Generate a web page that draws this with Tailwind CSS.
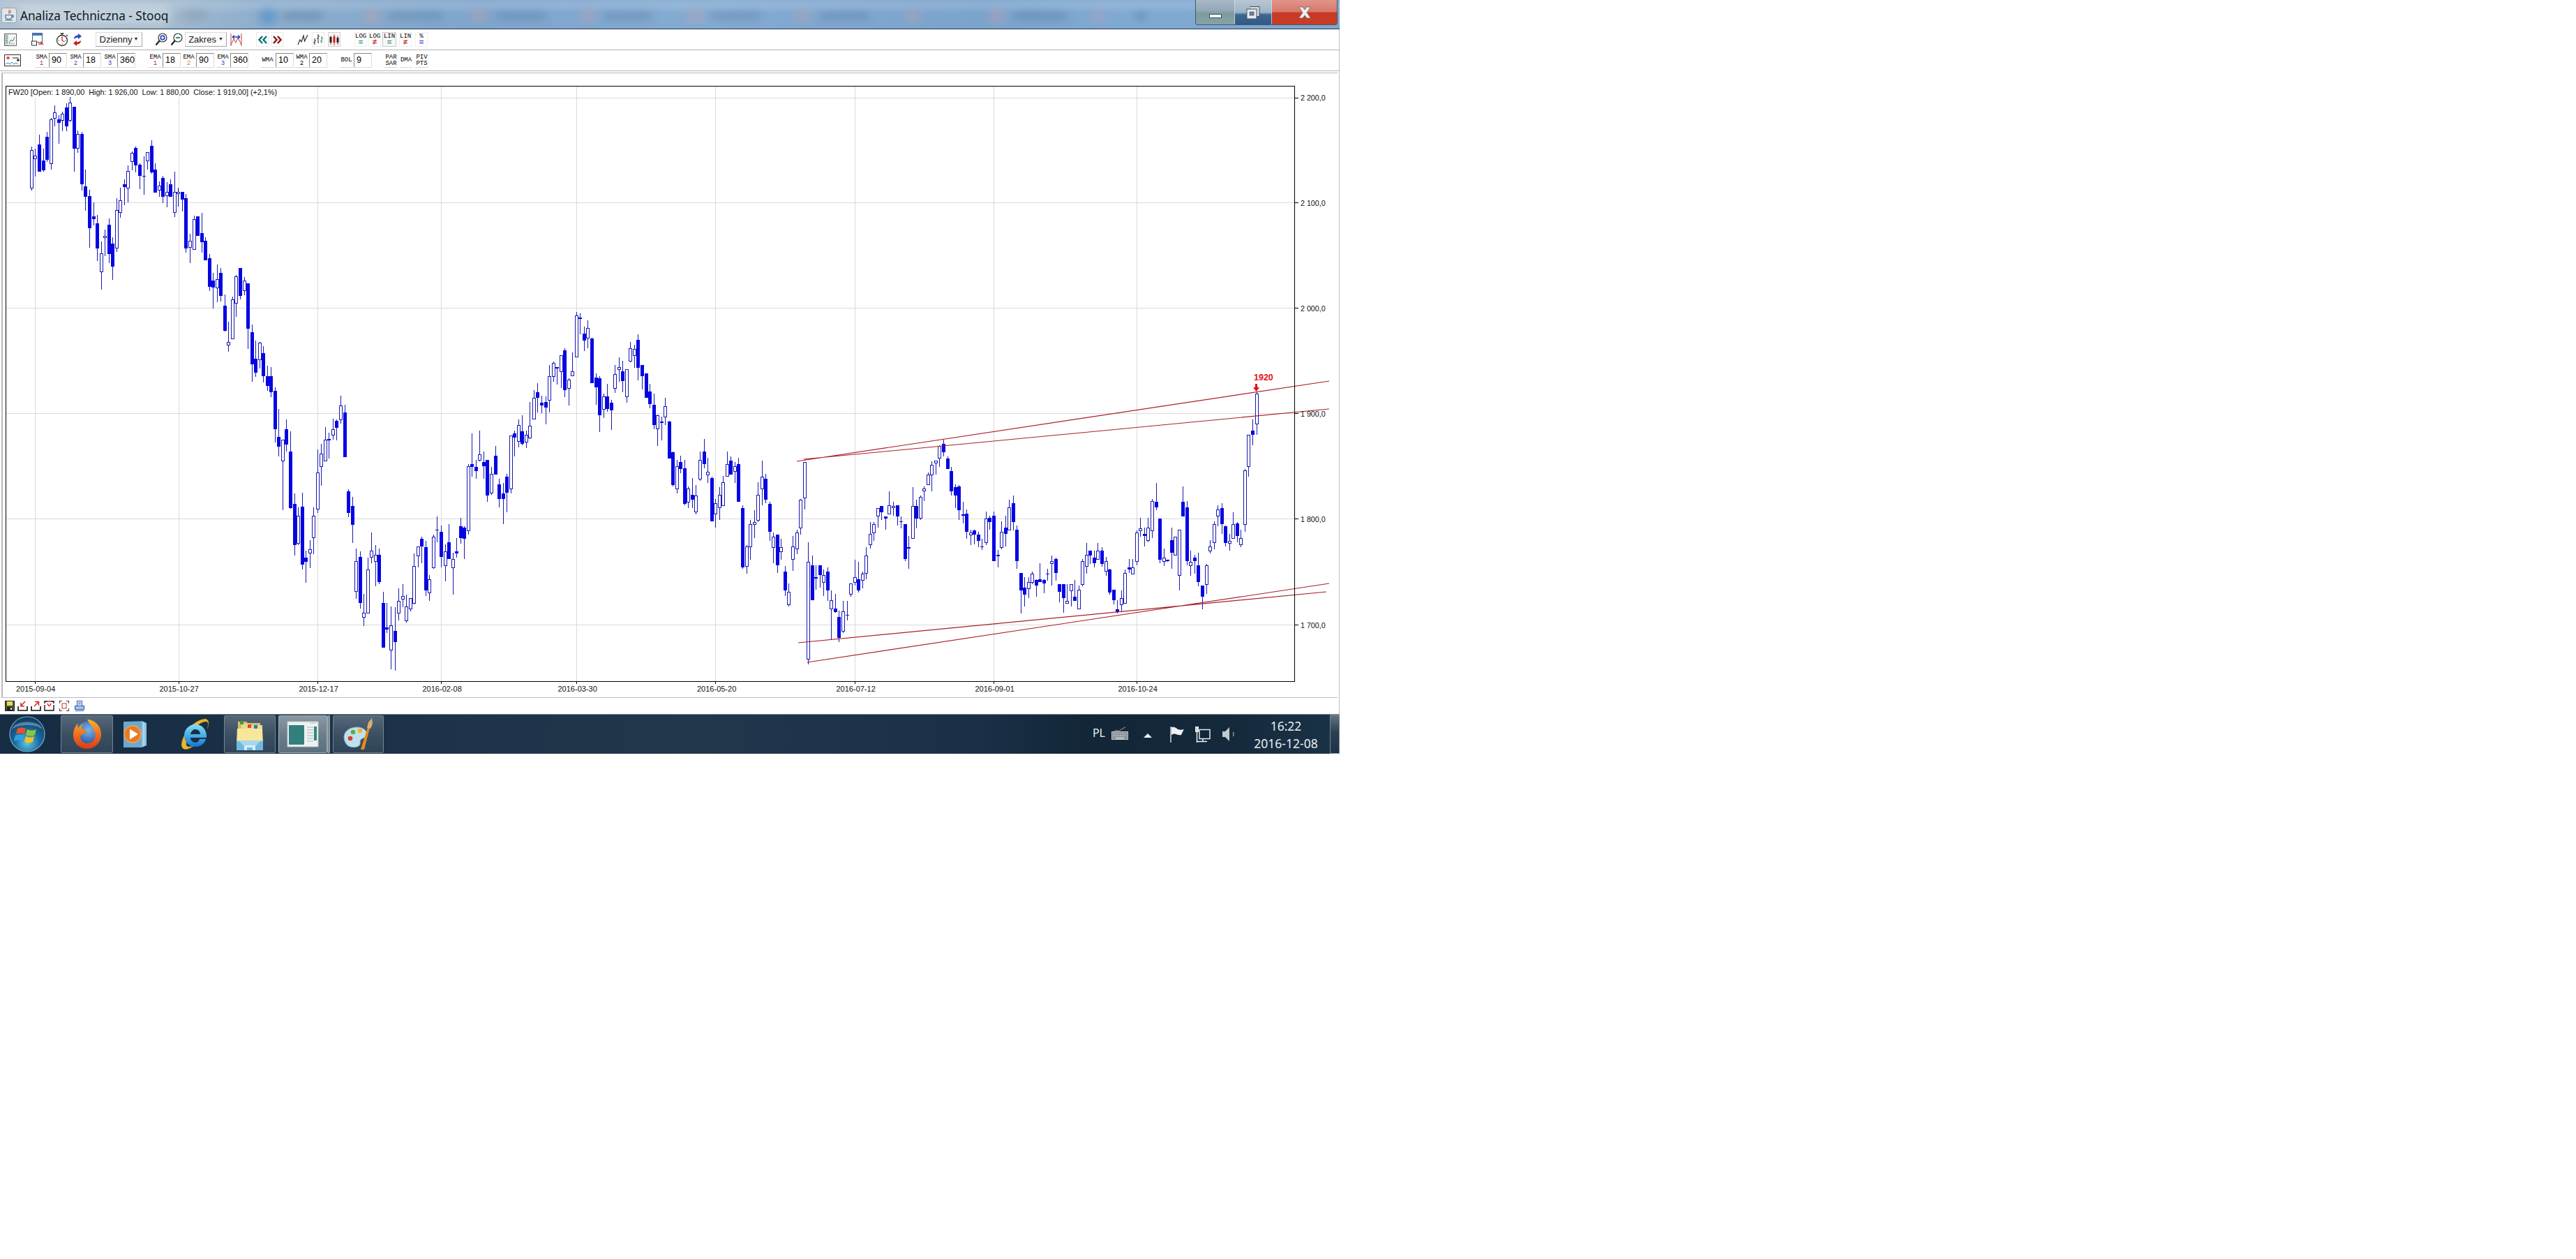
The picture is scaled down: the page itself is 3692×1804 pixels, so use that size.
<!DOCTYPE html>
<html><head><meta charset="utf-8">
<script src="https://cdn.jsdelivr.net/npm/@tailwindcss/browser@4"></script>
<title>Analiza Techniczna - Stooq</title></head>
<body class="bg-white">
<div class="w-[1920px] h-[1080px] flex flex-col font-['Liberation_Sans',sans-serif] text-black overflow-hidden">

<!-- title bar -->
<header class="relative h-[42px] shrink-0 overflow-hidden border-b border-[#24384c] bg-[linear-gradient(90deg,#aebfd0_0px,#a3bace_240px,#8fafcd_360px,#7ea5cd_700px,#84abd2_1000px,#7ba3cc_1400px,#80a9d2_1600px,#7ea6cf_1920px)]">
  <div class="absolute left-0 right-0 top-0 h-[14px] bg-white/15 blur-[4px]"></div>
  <div class="absolute left-[262px] top-[16px] w-[34px] h-[12px] rounded-full bg-[#60748a]/30 blur-[7px]"></div>
  <div class="absolute left-[372px] top-[14px] w-[24px] h-[20px] rounded-full bg-[#3d82c8]/60 blur-[7px]"></div>
  <div class="absolute left-[405px] top-[18px] w-[58px] h-[10px] rounded-full bg-[#3c5f86]/35 blur-[6px]"></div>
  <div class="absolute left-[522px] top-[14px] w-[22px] h-[18px] rounded-full bg-[#c8a0a8]/50 blur-[7px]"></div>
  <div class="absolute left-[555px] top-[18px] w-[80px] h-[10px] rounded-full bg-[#46668a]/30 blur-[6px]"></div>
  <div class="absolute left-[674px] top-[14px] w-[24px] h-[18px] rounded-full bg-[#c8a0a8]/45 blur-[7px]"></div>
  <div class="absolute left-[712px] top-[18px] w-[70px] h-[10px] rounded-full bg-[#46668a]/30 blur-[6px]"></div>
  <div class="absolute left-[830px] top-[14px] w-[24px] h-[18px] rounded-full bg-[#c8a0a8]/40 blur-[7px]"></div>
  <div class="absolute left-[865px] top-[18px] w-[70px] h-[10px] rounded-full bg-[#46668a]/30 blur-[6px]"></div>
  <div class="absolute left-[985px] top-[14px] w-[24px] h-[18px] rounded-full bg-[#c8a0a8]/40 blur-[7px]"></div>
  <div class="absolute left-[1020px] top-[18px] w-[70px] h-[10px] rounded-full bg-[#46668a]/30 blur-[6px]"></div>
  <div class="absolute left-[1140px] top-[14px] w-[24px] h-[18px] rounded-full bg-[#c8a0a8]/40 blur-[7px]"></div>
  <div class="absolute left-[1175px] top-[18px] w-[70px] h-[10px] rounded-full bg-[#46668a]/30 blur-[6px]"></div>
  <div class="absolute left-[1296px] top-[14px] w-[24px] h-[18px] rounded-full bg-[#c8a0a8]/40 blur-[7px]"></div>
  <div class="absolute left-[1418px] top-[14px] w-[22px] h-[18px] rounded-full bg-[#c8a0b0]/50 blur-[7px]"></div>
  <div class="absolute left-[1454px] top-[18px] w-[76px] h-[10px] rounded-full bg-[#46668a]/35 blur-[6px]"></div>
  <div class="absolute left-[1566px] top-[14px] w-[16px] h-[18px] rounded-full bg-[#c8a0b0]/45 blur-[7px]"></div>
  <div class="absolute left-[1627px] top-[18px] w-[16px] h-[10px] rounded-full bg-[#46668a]/40 blur-[6px]"></div>
  <div class="absolute left-[24px] top-[8px] w-[222px] h-[28px] rounded-full bg-white/30 blur-[7px]"></div>
  <div class="absolute left-[2px] top-[11px]">
    <svg width="22" height="22" viewBox="0 0 22 22"><rect x=".5" y=".5" width="21" height="21" rx="3" fill="#dfe6ec" stroke="#9aa5b0"/><path d="M11 3c2 2-2 3 0 5.500M13 4c1 1.500-1 2.500 0 4" fill="none" stroke="#d9631c" stroke-width="1.300"/><path d="M6 10.500h9v3.500c0 2-2 2.500-4.500 2.500S6 16 6 14zM15 11h2v2.500h-2M5 18h11" fill="none" stroke="#3b6ea5" stroke-width="1.200"/></svg>
  </div>
  <h1 class="absolute left-[29px] top-[10px] text-[17.200px] leading-[26px] font-normal text-[#101820] font-['Noto_Sans',sans-serif] whitespace-nowrap">Analiza Techniczna - Stooq</h1>
  <div class="absolute left-[1713px] top-0 w-[204px] h-[36px] flex rounded-b-[4px] border border-t-0 border-[#44586c] overflow-hidden">
    <div class="w-[56px] h-full flex items-center justify-center border-r border-[#dfe6ea]/70 bg-[linear-gradient(180deg,#a9b9c8_0%,#90a6b6_45%,#7d9a9c_55%,#86a3a8_100%)]">
      <span class="block w-[18px] h-[6px] mt-[10px] bg-[#f2f4f5] border border-[#45515c]"></span>
    </div>
    <div class="w-[53px] h-full flex items-center justify-center border-r border-[#dfe6ea]/70 bg-[linear-gradient(180deg,#b7c7d4_0%,#9db5c7_50%,#3f6790_60%,#2f5a88_100%)]">
      <svg width="20" height="20" viewBox="0 0 20 20"><path d="M5 1.500h14v14h-4" fill="#d5dce2" stroke="#48535e"/><rect x="1" y="5" width="14" height="14" fill="#e8ecef" stroke="#48535e"/><rect x="5" y="9" width="6" height="5" fill="#6d8197" stroke="#48535e" stroke-width=".7"/></svg>
    </div>
    <div class="flex-1 h-full flex items-center justify-center bg-[linear-gradient(180deg,#e2948a_0%,#d8786c_48%,#c93a24_52%,#c83c28_100%)]">
      <svg width="20" height="18" viewBox="0 0 20 18"><path d="M1.500 1h5.500l3 4 3-4h5.500l-5.500 8 5.500 8H13l-3-4-3 4H1.500l5.500-8z" fill="#eee" stroke="#6b6560" stroke-width=".8"/></svg>
    </div>
  </div>
</header>

<div class="flex-1 flex flex-col border-r border-[#bdbdbd] min-h-0">
<!-- toolbar row 1 -->
<nav class="h-[30px] shrink-0 border-b border-[#b3b3b3] flex items-center pl-[6px]">
  <svg width="18" height="18" viewBox="0 0 18 18"><rect x=".5" y=".5" width="17" height="17" fill="#f4f8f6" stroke="#5d6a66"/><rect x="1" y="1" width="5" height="16" fill="#c6d9cf"/><path d="M2 4h3M2 7h3M2 10h3M2 13h3" stroke="#607a6e"/><path d="M7 14l3-5 2 2 3-6" fill="none" stroke="#4a7a60"/><path d="M8 16v-2M11 16v-3M14 16v-2" stroke="#7a8a84"/></svg>
  <span class="ml-[21px]"><svg width="18" height="19" viewBox="0 0 18 19"><rect x="1.500" y=".5" width="14" height="13" fill="#fff" stroke="#445a80"/><rect x="1.500" y=".5" width="14" height="3.500" fill="#4a77b8"/><rect x=".5" y="12" width="7" height="6" fill="#fff" stroke="#333"/><path d="M10 16h6M13 13l3 3-3 0" fill="none" stroke="#d22" stroke-width="1.500"/></svg></span>
  <span class="ml-[17px]"><svg width="18" height="20" viewBox="0 0 18 20"><circle cx="9" cy="11" r="7.500" fill="#fff" stroke="#333" stroke-width="1.300"/><path d="M6.500 1h5M9 1v2.500M15 3l1.800 1.800" stroke="#333" stroke-width="1.500"/><path d="M9 11V5.500M9 11l3.500 2" stroke="#d22" stroke-width="1.300"/><path d="M3.500 11h1.500M13 11h1.500M9 15v1.500" stroke="#555"/></svg></span>
  <span class="ml-[6px]"><svg width="14" height="20" viewBox="0 0 14 20"><path d="M2 9c0-4 3-5.500 6-5.500V1l5 4-5 4V6.500C6 6.500 4 7.500 2 9z" fill="#2b47c8"/><path d="M12 11c0 4-3 5.500-6 5.500V19l-5-4 5-4v2.500c2 0 4-1 6-2.500z" fill="#c8201c"/></svg></span>
  <button class="ml-[19px] w-[67px] h-[21px] flex items-center justify-center border border-[#dcdcdc] border-b-[#a8a8a8] border-r-[#a8a8a8] text-[13px] text-[#222] bg-[#fbfbfb]">Dzienny<span class="ml-[2px] text-[7px]">▼</span></button>
  <span class="ml-[18px]"><svg width="18" height="19" viewBox="0 0 18 19"><circle cx="11" cy="7" r="6" fill="#fff" stroke="#333" stroke-width="1.200"/><path d="M6.500 11.500L1.500 17.500" stroke="#222" stroke-width="2.200"/><circle cx="11" cy="7" r="3.800" fill="#2d50c0"/><path d="M8.800 7h4.400M11 4.800v4.400" stroke="#fff" stroke-width="1.300"/></svg></span>
  <span class="ml-[4px]"><svg width="18" height="19" viewBox="0 0 18 19"><circle cx="11" cy="7" r="6" fill="#fff" stroke="#333" stroke-width="1.200"/><path d="M6.500 11.500L1.500 17.500" stroke="#222" stroke-width="2.200"/><path d="M8 7h6" stroke="#1d9a55" stroke-width="2"/></svg></span>
  <button class="ml-[3px] w-[60px] h-[21px] flex items-center justify-center border border-[#dcdcdc] border-b-[#a8a8a8] border-r-[#a8a8a8] text-[13px] text-[#222] bg-[#fbfbfb]">Zakres<span class="ml-[3px] text-[7px]">▼</span></button>
  <span class="ml-[5px]"><svg width="17" height="20" viewBox="0 0 17 20"><path d="M1 1v18M16 1v18" stroke="#b43" stroke-width="1"/><path d="M1 17l4-8 3 5 3-7 5 10" fill="none" stroke="#c33"/><path d="M3 6h11M3 6l3-2.500M3 6l3 2.500M14 6l-3-2.500M14 6l-3 2.500" fill="none" stroke="#2240c8" stroke-width="1.300"/></svg></span>
  <span class="ml-[20px] w-[18px] h-[21px] flex items-center justify-center border border-[#e9e9e9]"><svg width="13" height="12" viewBox="0 0 13 12"><path d="M6 1L1.500 6 6 11M12 1L7.500 6l4.500 5" fill="none" stroke="#0b7a78" stroke-width="2.600"/></svg></span>
  <span class="ml-[4px] w-[17px] h-[21px] flex items-center justify-center border border-[#e9e9e9]"><svg width="13" height="12" viewBox="0 0 13 12"><path d="M1 1l4.500 5L1 11M7 1l4.500 5L7 11" fill="none" stroke="#8d1a1a" stroke-width="2.600"/></svg></span>
  <span class="ml-[19px] w-[18px] h-[21px] flex items-center justify-center"><svg width="16" height="16" viewBox="0 0 16 16"><path d="M1 15l3-7 2 3 3-9 1.500 8L15 1" fill="none" stroke="#222" stroke-width="1.100"/></svg></span>
  <span class="ml-[4px] w-[18px] h-[21px] flex items-center justify-center border border-[#e9e9e9]"><svg width="16" height="17" viewBox="0 0 16 17"><path d="M3 7v9M1 13h2M3 10h2M8 1v13M6 7h2M8 4h2" stroke="#222"/><path d="M13 4v10M11 11h2M13 7h2" stroke="#16884a"/></svg></span>
  <span class="ml-[5px] w-[18px] h-[21px] flex items-center justify-center border border-[#cfcfcf] bg-[#f6f6f6]"><svg width="16" height="18" viewBox="0 0 16 18"><path d="M3 3v13M8 1v16M13 3v13" stroke="#c22"/><rect x="1.500" y="5" width="3" height="8" fill="#222"/><rect x="6.500" y="4" width="3" height="9" fill="#c22"/><rect x="11.500" y="6" width="3" height="7" fill="#222"/></svg></span>

  <div class="ml-[20px] flex items-center gap-[2px] font-['Liberation_Mono',monospace] text-[9px] leading-[9px] text-center">
    <span class="w-[18px] h-[21px] pt-[1px] border border-[#efefef]">LOG<br><b class="text-[#109050] text-[11px]">=</b></span>
    <span class="w-[18px] h-[21px] pt-[1px] border border-[#efefef]">LOG<br><b class="text-[#d02020] text-[11px]">≠</b></span>
    <span class="w-[20px] h-[21px] pt-[1px] border border-[#c8c8c8] bg-[#f7f7f7]">LIN<br><b class="text-[#109050] text-[11px]">=</b></span>
    <span class="w-[18px] h-[21px] pt-[1px] ml-[2px] border border-[#efefef]">LIN<br><b class="text-[#d02020] text-[11px]">≠</b></span>
    <span class="w-[18px] h-[21px] pt-[1px] ml-[3px] border border-[#efefef]">%<br><b class="text-[#2040c8] text-[11px]">=</b></span>
  </div>
</nav>

<!-- toolbar row 2 -->
<nav class="h-[30px] shrink-0 border-b border-[#b3b3b3] flex items-center pl-[6px] font-['Liberation_Mono',monospace] text-[9px] leading-[9px] text-center">
  <svg width="24" height="17" viewBox="0 0 24 17"><rect x=".5" y=".5" width="23" height="16" fill="#fff" stroke="#333"/><path d="M3 5h5M5.500 2.500v5" stroke="#d22" stroke-width="1.300"/><path d="M12 5h8M20 5v4M18 7.500l2 2 2-2" fill="none" stroke="#222" stroke-width="1.100"/><path d="M2 14l3-2 3 2 3-3 3 3 3-2 3 2" fill="none" stroke="#2b8ac0"/></svg>
  <div class="ml-[20px] flex items-center">
    <span class="w-[19px] h-[20px] pt-[1px] border-b border-[#d8d8d8]">SMA<br><b class="font-normal text-[#d02020]">1</b></span>
    <span class="ml-[1px] w-[26px] h-[21px] border border-[#dcdcdc] border-t-[#8a8a8a] border-l-[#8a8a8a] pl-[3px] text-left font-['Liberation_Sans',sans-serif] text-[12.500px] leading-[19px]">90</span>
    <span class="ml-[3px] w-[19px] h-[20px] pt-[1px] border-b border-[#d8d8d8]">SMA<br><b class="font-normal text-[#9020b0]">2</b></span>
    <span class="ml-[1px] w-[26px] h-[21px] border border-[#dcdcdc] border-t-[#8a8a8a] border-l-[#8a8a8a] pl-[3px] text-left font-['Liberation_Sans',sans-serif] text-[12.500px] leading-[19px]">18</span>
    <span class="ml-[3px] w-[19px] h-[20px] pt-[1px] border-b border-[#d8d8d8]">SMA<br><b class="font-normal text-[#2040c8]">3</b></span>
    <span class="ml-[1px] w-[26px] h-[21px] border border-[#dcdcdc] border-t-[#8a8a8a] border-l-[#8a8a8a] pl-[3px] text-left font-['Liberation_Sans',sans-serif] text-[12.500px] leading-[19px]">360</span>
  </div>
  <div class="ml-[19px] flex items-center">
    <span class="w-[19px] h-[20px] pt-[1px] border-b border-[#d8d8d8]">EMA<br><b class="font-normal text-[#d02020]">1</b></span>
    <span class="ml-[1px] w-[26px] h-[21px] border border-[#dcdcdc] border-t-[#8a8a8a] border-l-[#8a8a8a] pl-[3px] text-left font-['Liberation_Sans',sans-serif] text-[12.500px] leading-[19px]">18</span>
    <span class="ml-[2px] w-[19px] h-[20px] pt-[1px] border-b border-[#d8d8d8]">EMA<br><b class="font-normal text-[#e08010]">2</b></span>
    <span class="ml-[1px] w-[26px] h-[21px] border border-[#dcdcdc] border-t-[#8a8a8a] border-l-[#8a8a8a] pl-[3px] text-left font-['Liberation_Sans',sans-serif] text-[12.500px] leading-[19px]">90</span>
    <span class="ml-[3px] w-[19px] h-[20px] pt-[1px] border-b border-[#d8d8d8]">EMA<br><b class="font-normal text-[#2040c8]">3</b></span>
    <span class="ml-[1px] w-[26px] h-[21px] border border-[#dcdcdc] border-t-[#8a8a8a] border-l-[#8a8a8a] pl-[3px] text-left font-['Liberation_Sans',sans-serif] text-[12.500px] leading-[19px]">360</span>
  </div>
  <div class="ml-[18px] flex items-center">
    <span class="w-[19px] h-[20px] pt-[5px] border-b border-[#d8d8d8]">WMA</span>
    <span class="ml-[2px] w-[26px] h-[21px] border border-[#dcdcdc] border-t-[#8a8a8a] border-l-[#8a8a8a] pl-[3px] text-left font-['Liberation_Sans',sans-serif] text-[12.500px] leading-[19px]">10</span>
    <span class="ml-[2px] w-[19px] h-[20px] pt-[1px] border-b border-[#d8d8d8]">WMA<br>2</span>
    <span class="ml-[1px] w-[26px] h-[21px] border border-[#dcdcdc] border-t-[#8a8a8a] border-l-[#8a8a8a] pl-[3px] text-left font-['Liberation_Sans',sans-serif] text-[12.500px] leading-[19px]">20</span>
  </div>
  <div class="ml-[18px] flex items-center">
    <span class="w-[19px] h-[20px] pt-[5px] border-b border-[#d8d8d8]">BOL</span>
    <span class="ml-[1px] w-[26px] h-[21px] border border-[#dcdcdc] border-t-[#8a8a8a] border-l-[#8a8a8a] pl-[3px] text-left font-['Liberation_Sans',sans-serif] text-[12.500px] leading-[19px]">9</span>
  </div>
  <div class="ml-[18px] flex items-center">
    <span class="w-[19px] h-[20px] pt-[1px] border-b border-[#d8d8d8]">PAR<br>SAR</span>
    <span class="ml-[3px] w-[18px] h-[20px] pt-[5px] border-b border-[#d8d8d8]">DMA</span>
    <span class="ml-[4px] w-[19px] h-[20px] pt-[1px] border-b border-[#d8d8d8]">PIV<br>PTS</span>
  </div>
</nav>

<!-- chart -->
<main class="relative h-[898px] shrink-0 pt-[2px] pl-[2px] pr-[2px]">
  <div class="h-[896px] border-l-2 border-t border-b border-[#b9b9b9]"></div>
  <svg id="chart" class="absolute left-0 top-0" width="1919" height="898" viewBox="0 102 1919 898" font-family="'Liberation Sans',sans-serif">
    <g stroke="#dadada" shape-rendering="crispEdges">
      <path d="M50.500 140V976M256.500 140V976M455.500 124V976M632.500 124V976M826.500 124V976M1025.500 124V976M1225.500 124V976M1424.500 124V976M1629.500 124V976"/>
      <path d="M400 140.500H1856M9 290.500H1856M9 441.500H1856M9 592.500H1856M9 743.500H1856M9 895.500H1856"/>
    </g>
    <g id="candles" shape-rendering="crispEdges"></g>
    <g stroke="#a81f28" stroke-width="1.100" fill="none">
      <path d="M1142 661L1905 546M1152 658L1905 586M1144 921L1901 848M1157 949L1905 836"/>
    </g>
    <rect x="8.500" y="123.500" width="1847" height="852.500" fill="none" stroke="#000" shape-rendering="crispEdges"/>
    <g stroke="#000" shape-rendering="crispEdges">
      <path d="M1856 140.500h5M1856 290.500h5M1856 441.500h5M1856 592.500h5M1856 743.500h5M1856 895.500h5"/>
      <path d="M50.500 976v4M256.500 976v4M455.500 976v4M632.500 976v4M826.500 976v4M1025.500 976v4M1225.500 976v4M1424.500 976v4M1629.500 976v4"/>
    </g>
    <g font-size="11" fill="#111">
      <text x="12" y="136" font-size="10.800" xml:space="preserve">FW20 [Open: 1 890,00  High: 1 926,00  Low: 1 880,00  Close: 1 919,00] (+2,1%)</text>
      <text x="1864" y="144" font-size="10.700">2 200,0</text><text x="1864" y="295" font-size="10.700">2 100,0</text><text x="1864" y="446" font-size="10.700">2 000,0</text><text x="1864" y="597" font-size="10.700">1 900,0</text><text x="1864" y="748" font-size="10.700">1 800,0</text><text x="1864" y="900" font-size="10.700">1 700,0</text>
      <text x="23" y="991">2015-09-04</text><text x="228.500" y="991">2015-10-27</text><text x="428.500" y="991">2015-12-17</text><text x="605.500" y="991">2016-02-08</text><text x="799.500" y="991">2016-03-30</text><text x="999" y="991">2016-05-20</text><text x="1198.500" y="991">2016-07-12</text><text x="1397.500" y="991">2016-09-01</text><text x="1602.500" y="991">2016-10-24</text>
    </g>
    <text x="1797" y="545" font-size="12.500" font-weight="700" fill="#e01018">1920</text>
    <path d="M1799 550h3v5h3l-4.500 6-4.500-6h3z" fill="#e01018"/>
  </svg>
</main>

<!-- bottom toolbar -->
<div class="h-[23px] shrink-0 flex items-center pl-[7px] gap-[4px]">
  <svg width="14" height="15" viewBox="0 0 14 15"><rect x=".5" y=".5" width="13" height="14" fill="#4d5a2a" stroke="#222"/><rect x="3" y="1" width="8" height="6" fill="#e8d860"/><rect x="3" y="9" width="8" height="5" fill="#222"/><rect x="8" y="10" width="2" height="3" fill="#ddd"/></svg>
  <svg width="15" height="15" viewBox="0 0 15 15"><path d="M1 8v6h13V8" fill="none" stroke="#111" stroke-width="1.600"/><path d="M11 1L5.500 7M5 3v5h5" fill="none" stroke="#d22" stroke-width="1.500"/></svg>
  <svg width="15" height="15" viewBox="0 0 15 15"><path d="M1 8v6h13V8" fill="none" stroke="#111" stroke-width="1.600"/><path d="M5 8L11 2M6 1.500h5.500V7" fill="none" stroke="#d22" stroke-width="1.500"/></svg>
  <svg width="15" height="15" viewBox="0 0 15 15"><path d="M1 6v8h13V6M1 4V1h4M14 4V1h-4" fill="none" stroke="#111" stroke-width="1.400"/><path d="M5 4l2 4M10 4L8 8M4 1h7" fill="none" stroke="#d22" stroke-width="1.500"/></svg>
  <span class="ml-[3px]"><svg width="14" height="15" viewBox="0 0 14 15"><path d="M0 4V0h4M10 0h4v4M0 11v4h4M10 15h4v-4" fill="none" stroke="#111" stroke-width="1.600"/><rect x="4" y="4" width="6" height="7" fill="none" stroke="#c33"/></svg></span>
  <span class="ml-[4px]"><svg width="14" height="15" viewBox="0 0 14 15"><rect x="3.500" y=".5" width="7" height="7" fill="#fff" stroke="#2a55a8"/><rect x=".5" y="7.500" width="13" height="5" fill="#a8c4e8" stroke="#2a55a8"/><path d="M5 3h4M5 5h4" stroke="#2a55a8"/><path d="M1 14.500h12" stroke="#2a55a8"/></svg></span>
</div>
</div>

<!-- taskbar -->
<footer class="relative h-[57px] shrink-0 flex items-stretch border-t border-[#7d8992] bg-[linear-gradient(90deg,#152c43_0px,#1b3248_520px,#20374c_1000px,#1a3047_1400px,#122638_1560px,#15293c_1760px,#1b3347_1920px)] text-[#e8eef3] font-['Noto_Sans',sans-serif]">
  <div class="w-[87px] flex items-center justify-center shrink-0">
    <svg width="56" height="54" viewBox="0 0 56 54" class="mr-[10px]"><defs><radialGradient id="orb" cx=".5" cy=".75" r=".8"><stop offset="0" stop-color="#5fc6e8"/><stop offset=".45" stop-color="#1a6aa0"/><stop offset="1" stop-color="#0c2f52"/></radialGradient></defs><circle cx="28" cy="27" r="25" fill="url(#orb)" stroke="#7fa9c2" stroke-width="1.200"/><path d="M14 19c4-2 8-2 12 0l-2 8c-4-2-8-2-12 0z" fill="#e8502c"/><path d="M28 20c4 2 9 2 13 0l-2 8c-4 2-8 2-13 0z" fill="#8cc63f"/><path d="M11 29c4-2 9-2 13 0l-2 8c-4-2-9-2-13 0z" fill="#2aa2e0"/><path d="M26 30c4 2 8 2 12 0l-2 8c-4 2-8 2-12 0z" fill="#f5c21a"/><path d="M6 20C10 6 46 6 50 20 40 12 16 12 6 20z" fill="#fff" opacity=".3"/></svg>
  </div>
  <div class="relative w-[75px] my-[1px] rounded-[2px] border border-[#75838f] bg-[linear-gradient(180deg,#56677a_0%,#3c5062_50%,#2f4458_100%)] flex items-center justify-center">
    <svg width="46" height="46" viewBox="0 0 46 46"><defs><radialGradient id="ffg" cx=".55" cy=".35" r=".6"><stop offset="0" stop-color="#7ab6e8"/><stop offset="1" stop-color="#2a5aa8"/></radialGradient><linearGradient id="ffo" x1="0" y1="0" x2="0" y2="1"><stop offset="0" stop-color="#f7b32a"/><stop offset=".55" stop-color="#ee6a1f"/><stop offset="1" stop-color="#d93a18"/></linearGradient></defs><circle cx="23" cy="22" r="17" fill="url(#ffg)"/><path d="M23 2c9 0 20 8 20 21 0 12-9 21-20 21C11 44 3 35 3 24c0-7 3-13 7-17-1 3-1 5 0 7 2-3 5-5 8-6-3 3-4 5-3 7 3 1 6 2 7 5-2 3-7 2-9 6 0 7 6 11 12 10 7-1 11-8 9-15-2-7-7-12-11-19z" fill="url(#ffo)"/></svg>
  </div>
  <div class="w-[64px] flex items-center justify-center">
    <svg width="42" height="46" viewBox="0 0 42 46"><path d="M6 5l24 -1 6 3v32l-6 3-24-1z" fill="#3f88b8"/><path d="M30 4l7 3v32l-7 3z" fill="#8cc3e2"/><path d="M33 6v34" stroke="#d4ebf6"/><rect x="4" y="5" width="26" height="37" fill="#6ea9cc"/><circle cx="17" cy="23" r="12" fill="#e77c24"/><circle cx="17" cy="23" r="12" fill="none" stroke="#f3a55b" stroke-width="1.500"/><path d="M13 15.500v15l12-7.500z" fill="#fff"/></svg>
  </div>
  <div class="w-[50px] ml-[28px] flex items-center justify-center">
    <svg width="48" height="48" viewBox="0 0 48 48"><defs><linearGradient id="ieb" x1="0" y1="0" x2="0" y2="1"><stop offset="0" stop-color="#7fe0f7"/><stop offset="1" stop-color="#1477d4"/></linearGradient></defs><path d="M39 2c-9 1-21 8-28 20C5 33 3 42 8 45c4 2 11-1 17-6-5 3-10 4-12 2-3-3 0-11 6-20C26 11 36 5 41 6c3 1 3 5 1 10 3-7 3-13-3-14z" fill="#e8b82c" stroke="#a67c10" stroke-width=".5"/><path d="M25 10c-9 0-16 7-16 16s7 16 16 16c7 0 13-4 15-11H31c-1 3-3 5-6 5-4 0-7-3-7-7h23c1-11-6-19-16-19zm-7 14c0-4 3-7 7-7s7 3 7 7z" fill="url(#ieb)" fill-rule="evenodd"/></svg>
  </div>
  <div class="w-[74px] ml-[17px] my-[1px] rounded-[2px] border border-[#75838f] bg-[linear-gradient(180deg,#56677a_0%,#3c5062_50%,#2f4458_100%)] flex items-center justify-center">
    <svg width="50" height="50" viewBox="0 0 50 50"><path d="M8 7h12l2 2h18v30H8z" fill="#d8bf6a"/><path d="M13 10h12l2 2h16v26H13z" fill="#ecd98c"/><rect x="11" y="6" width="5" height="5" fill="#4a9a3a"/><rect x="22" y="11" width="5" height="5" fill="#d84a28"/><rect x="31" y="12" width="5" height="5" fill="#2a7ac8"/><path d="M7 17h36l1 22H6z" fill="#f7e79a"/><path d="M6 35h38v13H6z" fill="#6fb8e0"/><path d="M6 34c6 2 8 5 9 7h20c1-2 3-5 9-7" fill="#a7d6ee"/><path d="M17 48v-7h16v7h-4v-4h-8v4z" fill="#d9eef9"/></svg>
  </div>
  <div class="w-[70px] ml-[4px] my-[1px] rounded-[2px] border border-[#a2aeb6] bg-[linear-gradient(180deg,#8a98a3_0%,#6d7e8b_50%,#5b6f7e_100%)] flex items-center justify-center">
    <svg width="46" height="46" viewBox="0 0 46 46"><rect x="1" y="5" width="44" height="36" fill="#eef1f3" stroke="#b9c2c8"/><rect x="3" y="10" width="22" height="28" fill="#2f8a70"/><rect x="3" y="10" width="22" height="28" fill="#3a6d98" opacity=".35"/><path d="M29 13h9M29 17h9M29 21h9M29 25h9M29 29h9M29 33h9" stroke="#aab4ba"/><rect x="39" y="12" width="4" height="20" fill="#2f8a70"/><path d="M34 7h1M37 7h1M40 7h1" stroke="#555"/></svg>
  </div>
  <div class="w-[4px] my-[1px] rounded-[1px] bg-[#7e8c97] border border-[#95a2ab]"></div>
  <div class="w-[73px] ml-[4px] my-[1px] rounded-[2px] border border-[#75838f] bg-[linear-gradient(180deg,#56677a_0%,#3c5062_50%,#2f4458_100%)] flex items-center justify-center">
    <svg width="50" height="48" viewBox="0 0 50 48"><path d="M4 28c0-9 10-15 21-14 9 1 14 8 11 13-2 3-6 2-8 5-2 3 1 6-3 9-5 3-12 2-16-1-3-3-5-7-5-12z" fill="#bfe0ef" stroke="#7fa8bd"/><circle cx="13" cy="30" r="3.300" fill="#d8402e"/><circle cx="17" cy="21" r="3.300" fill="#58b048"/><circle cx="27" cy="19" r="3.300" fill="#e8b82c"/><path d="M28 46L38 14l3 1-8 31z" fill="#e88a1a"/><path d="M37 15l2-8 5-6 1 8-3 7z" fill="#d8b070"/></svg>
  </div>
  <div class="ml-auto flex items-center">
    <span class="text-[16px] leading-none mb-[5px]">PL</span>
    <span class="ml-[9px] mb-[5px]"><svg width="24" height="20" viewBox="0 0 24 20"><path d="M4 8c2-3 6 1 9-2 2-2 5-3 7-4" fill="none" stroke="#a8b2ba"/><rect x=".5" y="8.500" width="23" height="11" fill="#7c868e" stroke="#c5ccd2"/><path d="M2.500 11h19M2.500 13.500h19M2.500 16h19" stroke="#e2e6ea" stroke-dasharray="2 1"/><path d="M6 18h12" stroke="#eee"/></svg></span>
    <span class="ml-[22px] mt-[4px]"><svg width="12" height="6" viewBox="0 0 12 6"><path d="M0 6L6 0l6 6z" fill="#eef2f5"/></svg></span>
    <span class="ml-[26px]"><svg width="21" height="23" viewBox="0 0 21 23"><path d="M1 0v23" stroke="#f0f3f5" stroke-width="1.300"/><path d="M2 1c4-1 7 1 9 3 3 1 6 1 9 0-2 3-3 6-4 8-4 1-6-1-8-1-2-1-4 0-6 1z" fill="#eef2f5"/></svg></span>
    <span class="ml-[14px]"><svg width="23" height="23" viewBox="0 0 23 23"><rect x="1.500" y="0.500" width="4" height="7" fill="#d8dde1" stroke="#e8ecef"/><path d="M3.500 8v15" stroke="#e8ecef" stroke-width="1.500"/><rect x="7" y="4.500" width="15" height="13" fill="#122638" stroke="#eef2f5" stroke-width="1.400"/><path d="M4 21.500h14M12 18v3" stroke="#eef2f5" stroke-width="1.500"/></svg></span>
    <span class="ml-[17px]"><svg width="18" height="20" viewBox="0 0 18 20"><path d="M0 6h4l6-6v20l-6-6H0z" fill="#c2c8cd"/><path d="M15 7c1.500 2 1.500 4 0 6" fill="none" stroke="#cfd5da"/></svg></span>
    <div class="ml-[27px] w-[92px] pt-[2px] flex flex-col items-center text-[17.500px] leading-[25px]">
      <span>16:22</span><span class="whitespace-nowrap">2016-12-08</span>
    </div>
    <div class="ml-[17px] w-[14px] h-full border border-[#78858f] bg-[linear-gradient(180deg,#647482_0%,#2a3f52_45%,#1c3246_100%)]"></div>
  </div>
</footer>
</div>

<script>
var groups=[
[0,120,3,"136H286 448 270 458;151H308 322 280 398;169F262 377 220 377;187F330 371 280 377;202F228 326 208 335;220H154 343 148 368;235H122 146 94 182;253F154 167 136 258;268H130 157 120 204;286F103 182 85 204;301H82 157 57 166;319F100 278 100 377;334H217 277 202 296;352F217 431 208 458;367F442 485 370 545;385F484 620 457 704;403F570 581 510 608;418F601 707 565 761;436H730 806 678 884;451H655 661 628 740;469F607 731 580 770;484F688 785 660 842;502H544 704 492 722;517H502 553 448 575;535F433 443 412 521;550H376 448 352 509;568H298 334 290 372;583F277 352 270 380;601F349 395 343 452;619D397 398 313 476;634H295 331 295 368;652F268 380 244 386;667F370 467 343 467;685H439 457 420 485;700F406 485 397 512;718H466 481 424 530;733F433 485 412 485;751H466 553 379 572;766H466 472 448 527;784F466 499 466 548;799F493 707 475 725;817H676 703 646 770;835H583 712 566 712;850F571 653 571 655;868F643 680 556 725;883F676 759 660 760;901F751 872 733 890;916F847 875 812 965;934H841 875 778 938;949F814 911 793 935;967F955 1061 907 1064;1000H928 1094 915 1094;1015H829 943 823 1001;1033F793 911 793 926;1051H847 889 832 910;1066F859 1053 859 1139"],
[0,440,2.903,"982H146 158 62 185;1084F105 237 73 310;1099F216 272 140 290;1117H149 219 146 256;1132F193 286 163 313;1150F286 328 245 347;1165F286 353 250 374;1183F347 507 335 562;1198F541 580 424 620;1216H553 640 553 844;1231F508 571 467 602;1249F602 835 517 838;1267F820 991 775 1033;1282H869 982 833 989;1300F829 1070 772 1091;1315F1043 1059 1013 1146;1333H1007 1023 970 1085;1348H869 957 833 1027;1366H689 838 592 856;1381H611 663 570 742;1399H553 638 499 641;1414F549 554 523 629;1432H509 532 465 553;1447F474 501 468 555;1465H408 468 369 485;1483F439 623 407 623;1498F765 856 758 873"],
[500,600,3,"16F376 455 336 533;31H613 740 559 773;49F595 793 571 817;64H835 853 754 890;82H649 835 598 835;97H568 595 490 622;115H586 613 544 721;130F586 701 559 710;148F793 985 745 985;163F897 907 793 922;181H889 994 808 1076;199F913 959 811 1082;214H784 835 730 868;232H763 775 712 811;247H808 868 757 877;265H772 817 772 829;280H634 793 580 799;298H550 589 550 640;313F517 550 508 622;331F553 739 526 763;346H691 748 673 784;364H508 640 499 646;379D478 479 421 532;397F487 595 460 640;415H571 631 541 700;430F532 604 454 604;448H604 640 577 757;463F571 580 514 598;481F463 514 427 536;496F469 517 463 604;514H205 481 196 499;529F196 208 64 248;547F208 226 178 259;562H154 178 52 184;580F187 205 142 259;595F178 331 178 358;613H238 319 208 328;631F160 241 118 241;646F283 346 259 382;664F322 346 277 454;679F250 319 238 403;697H73 301 73 322;712F64 82 52 163"],
[500,420,3,"730H568 637 544 664;745F595 649 526 655;763H610 640 592 667;778H571 622 469 628;796H451 541 418 541;811F427 451 388 514;829F472 482 442 515;847F469 491 445 563;862H358 460 310 514;880H301 358 295 380;895F319 323 319 392;913H268 337 268 408;928F247 418 238 447;946H373 409 367 482;961H337 355 256 358;979H97 274 82 277;994F106 109 88 177;1012F175 205 145 248;1027H151 193 118 238;1045F196 388 193 388;1063F364 406 346 479;1078F367 526 358 596;1096H445 499 433 536;1111F445 499 391 509;1129F472 505 460 587;1144H349 409 310 428;1162H319 328 277 380;1177F337 379 292 427;1195H328 445 328 470;1210H238 292 211 296;1228H241 268 223 320;1243F202 322 178 374;1261F310 358 310 415;1279F346 451 346 451;1294F424 478 391 496;1312F481 568 433 586;1327H526 583 523 656;1345F553 559 532 632;1360H487 532 451 568;1378F553 712 550 712;1393F685 826 682 832;1411H745 841 718 862;1426F727 757 700 775"],
[500,600,3,"1444F214 365 178 373;1459H301 358 292 385;1477F328 349 256 385;1492H331 400 286 412"],
[1000,600,3,"10H178 259 142 268;28F142 196 88 214;43H227 241 169 277;61F256 442 250 442;76H364 409 346 469;94H328 382 295 436;109H274 373 247 376;127H196 247 142 250;142F181 241 163 241;160H205 226 187 277;175F196 356 169 358;193F385 640 373 646;211H550 634 544 667;226H454 550 436 607;244H445 454 394 514;259H328 436 274 445;277H250 301 181 373;292F259 349 238 364;310F367 487 358 526;325H508 553 490 622;343F499 631 499 664;358H553 571 517 607;376F658 737 634 763;391H745 799 709 808;409H550 604 505 655;427H490 559 478 581;442H349 469 346 499;460H187 340 187 391;475H616 1033 532 1057;493F631 781 589 781;508F682 686 631 736;526F631 673 631 727;541H673 703 649 763;559F658 739 640 784;574H781 817 739 952;592F817 831 754 835;607F853 943 826 961;625H829 913 784 922;643D844 845 784 868;658H709 754 709 766;676H682 703 607 718;691F691 737 616 748;709H667 694 658 730;724H589 664 553 691;742H496 541 445 559;757H454 490 445 526;775H385 418 385 469;790F376 403 376 436;808F421 430 421 478;823H373 409 313 412;841H376 382 358 418;859F373 421 373 460;874D442 443 421 472;892F454 604 454 613;907F553 559 505 646;925H376 514 295 514;940F376 430 349 472;958H337 427 331 436;973H301 310 292 355;991H241 283 232 286;1006H199 241 184 313;1024H181 190 181 241;1039H118 169 115 208;1057F109 145 91 163;1075F172 217 163 217;1090F226 313 208 331;1108F295 331 283 385;1123F292 394 286 436;1141F412 418 358 451;1156F409 487 391 517;1174H490 499 478 544;1189F481 499 478 541;1207F499 526 487 553;1222D550 551 517 563;1240H430 532 400 544;1255F427 445 418 478;1273F418 613 400 613;1291F586 590 565 640;1306H487 553 442 562;1324F469 496 418 550;1339H382 478 349 481;1357F364 445 331 481;1372F478 613 460 646;1390F664 739 664 838;1405F727 757 682 808;1423H703 730 682 772;1438H667 703 658 710;1456F694 718 691 766;1471F691 703 622 703;1489F694 709 691 749"],
[1500,500,3,"3D967 973 945 996;22H913 922 889 1017;40F904 964 898 996;55F1012 1045 1010 1090;73F1012 1072 1012 1135;88H1084 1093 1012 1093;106H1012 1039 1012 1108;121F1066 1084 994 1084;139H1036 1117 1018 1117;154H913 1012 904 1021;172H886 934 835 967;187F868 889 868 925;205F898 922 868 940;220H868 904 835 904;238F868 925 853 935;256H913 955 895 976;271F949 1048 946 1057;289F1036 1081 1036 1099;304F1120 1132 1081 1138;322H1072 1099 1039 1132;337H964 1093 949 1093;355F940 949 904 964;370H940 967 904 967;388H790 913 781 931;403H772 781 727 808;421F796 805 769 850;436H769 823 727 832;454H655 781 646 814;472F658 682 577 694;487F730 907 730 922;505H898 913 859 934;520F907 913 907 916;538F823 877 769 946;553H808 886 808 886;571H778 973 778 1039;586F658 721 592 721;604F682 913 655 931;619H916 931 868 976;637F898 913 886 967;652F931 1003 877 1021;670F1018 1066 1018 1120;688H931 1012 925 1054;703H850 868 823 880;721H754 832 742 862;736H691 718 673 763;754F685 754 664 796;769F763 835 760 850;787H826 835 796 868;802H754 814 703 817;820F751 805 745 832;835H814 841 778 853;853H523 754 517 787;868H370 505 370 550;886F352 370 304 415;904H193 322 186 370"]
];
var all=[];
groups.forEach(function(g){g[3].split(";").forEach(function(s){
  var m=s.match(/^(\d+)([HFD])(\d+) (\d+) (\d+) (\d+)$/);
  var fy=function(v){return Math.round(g[1]+v/g[2])};
  all.push({x:Math.round(g[0]+(+m[1])/3),k:m[2],bt:fy(+m[3]),bb:fy(+m[4]),wt:fy(+m[5]),wb:fy(+m[6])});
});});
all.sort(function(a,b){return a.x-b.x});
var ns="http://www.w3.org/2000/svg",root=document.getElementById("candles");
function el(n,a){var e=document.createElementNS(ns,n);for(var k in a)e.setAttribute(k,a[k]);root.appendChild(e);}
all.forEach(function(c){
  el("path",{d:"M"+(c.x+.5)+" "+c.wt+"V"+c.wb,stroke:"#1717b4",fill:"none"});
  if(c.k=="F")el("rect",{x:c.x-2,y:c.bt,width:5,height:Math.max(c.bb-c.bt,2),fill:"#0505e4"});
  else if(c.k=="H")el("rect",{x:c.x-1.5,y:c.bt+.5,width:4,height:Math.max(c.bb-c.bt,1),fill:"#fff",stroke:"#1717b4"});
  else el("path",{d:"M"+(c.x-2)+" "+(c.bt+.5)+"H"+(c.x+3),stroke:"#1717b4"});
});
</script>
</body></html>
